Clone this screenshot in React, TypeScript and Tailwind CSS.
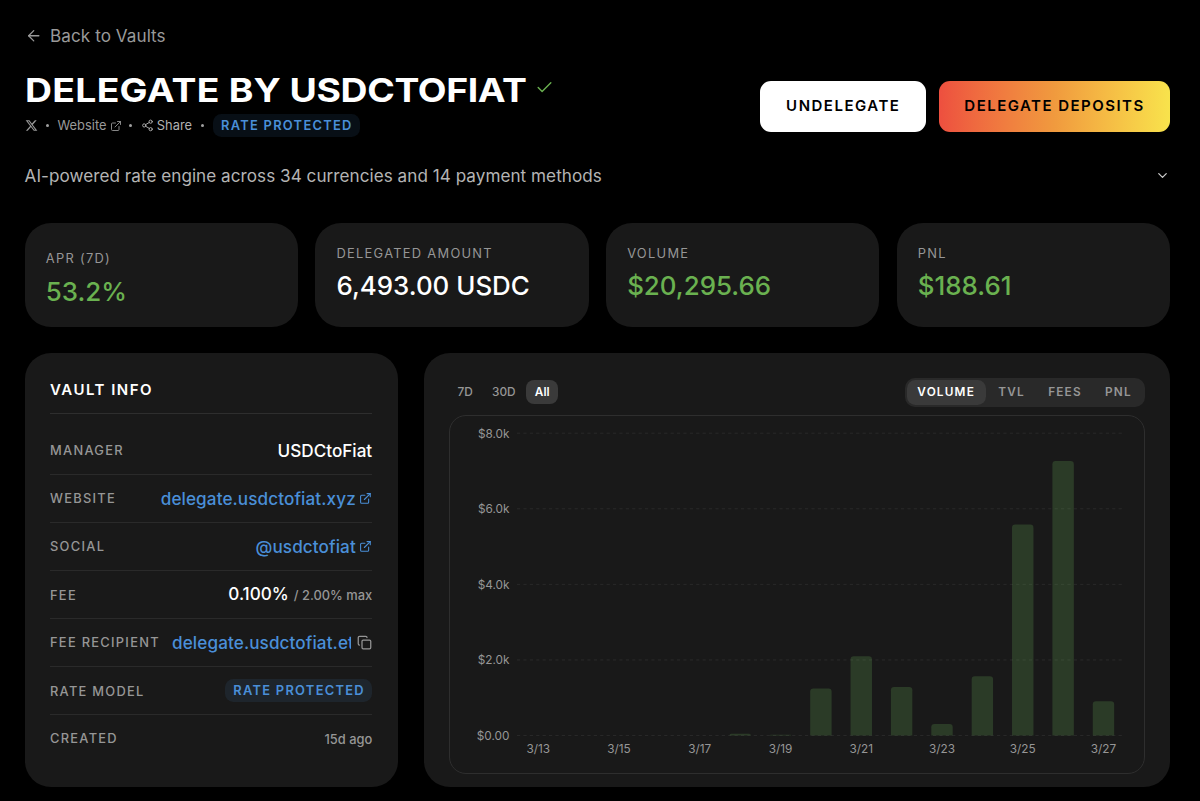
import React from "react";
import { ArrowLeft, Check, ChevronDown, Copy, ExternalLink, Share2 } from "lucide-react";

const LABEL = "text-[12.86px] leading-none tracking-[0.1em] text-[#969696] whitespace-nowrap";

function XLogo() {
  return (
    <svg viewBox="0 0 24 24" className="size-[13px]" fill="currentColor">
      <path d="M18.244 2.25h3.308l-7.227 8.26 8.502 11.24H16.17l-5.214-6.817L4.99 21.75H1.68l7.73-8.835L1.254 2.25H8.08l4.713 6.231zm-1.161 17.52h1.833L7.084 4.126H5.117z" />
    </svg>
  );
}

function Dot() {
  return <span className="size-[3px] shrink-0 rounded-full bg-[#a0a0a0]" />;
}

function RateBadge() {
  return (
    <span className="flex h-[23px] items-center rounded-[8.5px] bg-[#4a8fd8]/10 pt-[1px] pr-[7.3px] pl-[8.5px] text-[12.86px] font-semibold leading-none tracking-[0.1em] whitespace-nowrap text-[#4a8fd8]">
      RATE PROTECTED
    </span>
  );
}

function Header() {
  return (
    <header className="flex h-[90px] justify-between">
      <div>
        <div className="flex h-[40px] items-center">
          <h1 className="w-[505px] origin-left scale-x-[1.132] text-[33px] font-bold leading-[40px] whitespace-nowrap text-white">
            <span className="tracking-[0.25px]">DELEGATE</span> <span>BY</span> <span className="tracking-[-0.35px]">USDCTOFIAT</span>
          </h1>
          <Check className="mb-[5px] ml-[5px] size-[19px] text-[#6ab150]" strokeWidth={1.75} />
        </div>
        <div className="mt-[4px] flex h-[23px] items-center text-[12.86px] leading-none text-[#999999]">
          <XLogo />
          <span className="ml-[8.5px] flex">
            <Dot />
          </span>
          <span className="ml-[8.5px] pt-[2px]">Website</span>
          <ExternalLink className="ml-[3.5px] size-[12px]" strokeWidth={1.75} />
          <span className="ml-[7.5px] flex">
            <Dot />
          </span>
          <Share2 className="ml-[8.5px] size-[12.86px] text-[#b0b0b0]" strokeWidth={1.75} />
          <span className="ml-[3px] pt-[2px] text-[#b0b0b0]">Share</span>
          <span className="mr-[9px] ml-[8.5px] flex">
            <Dot />
          </span>
          <RateBadge />
        </div>
      </div>
      <div className="mt-[10.5px] flex h-[51px] gap-[13px] text-[15px] font-semibold leading-none tracking-[0.1em] text-black">
        <button className="w-[166.5px] rounded-[11px] bg-white pb-[1px] pl-[1px] whitespace-nowrap">UNDELEGATE</button>
        <button className="w-[231px] rounded-[11px] bg-linear-to-r from-[#ed4f3f] via-[#f09a3e] to-[#f8e34c] pb-[1px] tracking-[0.098em] whitespace-nowrap">
          DELEGATE DEPOSITS
        </button>
      </div>
    </header>
  );
}

const stats = [
  { label: "APR (7D)", value: "53.2%", color: "text-[#6ab150]", pad: "pt-[30px]", gap: "mt-[13.5px]" },
  { label: "DELEGATED AMOUNT", value: "6,493.00 USDC", color: "text-white", pad: "pt-[25px]", gap: "mt-[12px]" },
  { label: "VOLUME", value: "$20,295.66", color: "text-[#6ab150]", pad: "pt-[25px]", gap: "mt-[12px]" },
  { label: "PNL", value: "$188.61", color: "text-[#6ab150]", pad: "pt-[25px]", gap: "mt-[12px]" },
];

function Stats() {
  return (
    <section className="grid grid-cols-4 gap-[17.3px]">
      {stats.map((s) => (
        <div key={s.label} className={`h-[104px] rounded-[26px] bg-[#191919] pl-[21.2px] ${s.pad}`}>
          <div className={LABEL}>{s.label}</div>
          <div className={`text-[25.9px] leading-none font-medium whitespace-nowrap ${s.gap} ${s.color}`}>{s.value}</div>
        </div>
      ))}
    </section>
  );
}

function InfoRow({ label, shift, last, children }: { label: string; shift?: string; last?: boolean; children: React.ReactNode }) {
  return (
    <div className={`flex h-[48px] items-center justify-between ${last ? "" : "border-b border-[#2a2a2a]"}`}>
      <span className={`${LABEL} font-medium ${shift ?? "pt-[2px]"}`}>{label}</span>
      {children}
    </div>
  );
}

function InfoLink({ children }: { children: string }) {
  return (
    <a className="flex items-center gap-[3.5px] text-[17.14px] leading-none font-medium tracking-[0.1px] text-[#4a8fd8]">
      {children}
      <ExternalLink className="size-[12.86px]" strokeWidth={2} />
    </a>
  );
}

function VaultInfo() {
  return (
    <section className="w-[373px] rounded-[26px] bg-[#191919] px-[25.4px] pt-[26px]">
      <h2 className="h-[35px] border-b border-[#2e2e2e] text-[15px] leading-[21px] font-semibold tracking-[0.1em] text-white">VAULT INFO</h2>
      <div className="pt-[13px]">
        <InfoRow label="MANAGER">
          <span className="text-[17.14px] leading-none font-medium text-white">USDCtoFiat</span>
        </InfoRow>
        <InfoRow label="WEBSITE">
          <InfoLink>delegate.usdctofiat.xyz</InfoLink>
        </InfoRow>
        <InfoRow label="SOCIAL">
          <InfoLink>@usdctofiat</InfoLink>
        </InfoRow>
        <InfoRow label="FEE" shift="pt-[3px]">
          <span className="flex items-baseline gap-[5px] pb-[1px] text-[17.14px] leading-none font-medium text-white">
            0.100%<span className="text-[12.86px] text-[#969696]">/ 2.00% max</span>
          </span>
        </InfoRow>
        <InfoRow label="FEE RECIPIENT">
          <span className="flex items-center gap-[6px] text-[17.14px] leading-[21px] font-medium tracking-[0.1px] text-[#4a8fd8]">
            <span className="w-[179.2px] overflow-hidden whitespace-nowrap">delegate.usdctofiat.eth</span>
            <Copy className="size-[15px] text-[#969696]" strokeWidth={2} />
          </span>
        </InfoRow>
        <InfoRow label="RATE MODEL" shift="pt-[3px]">
          <RateBadge />
        </InfoRow>
        <InfoRow label="CREATED" last shift="pt-0">
          <span className="pt-[3px] text-[12.86px] leading-none font-medium text-[#969696]">15d ago</span>
        </InfoRow>
      </div>
    </section>
  );
}

const BASE = 735.5;
const bars = [
  { i: 5, top: 733.8 },
  { i: 6, top: 734.8 },
  { i: 7, top: 688.6 },
  { i: 8, top: 656.2 },
  { i: 9, top: 687 },
  { i: 10, top: 724 },
  { i: 11, top: 676.2 },
  { i: 12, top: 524.5 },
  { i: 13, top: 461 },
  { i: 14, top: 701.3 },
];
const yTicks = ["$8.0k", "$6.0k", "$4.0k", "$2.0k", "$0.00"];
const xTicks = ["3/13", "3/15", "3/17", "3/19", "3/21", "3/23", "3/25", "3/27"];
const center = (i: number) => 538.3 + i * 40.37;

function barPath(x: number, top: number) {
  const r = Math.min(3.2, BASE - top);
  return `M${x} ${BASE}V${top + r}Q${x} ${top} ${x + r} ${top}H${x + 21.4 - r}Q${x + 21.4} ${top} ${x + 21.4} ${top + r}V${BASE}Z`;
}

function Chart() {
  return (
    <svg viewBox="450 416 694 357" className="block h-[357px] w-[694px]">
      {yTicks.map((t, i) => (
        <g key={t}>
          <line x1="517" x2="1122" y1={433.2 + i * 75.58} y2={433.2 + i * 75.58} stroke="#292929" strokeWidth="1" strokeDasharray="3.2 3.2" />
          <text x="509.5" y={437.5 + i * 75.58} textAnchor="end" className="fill-[#969696] text-[11.8px]">
            {t}
          </text>
        </g>
      ))}
      {bars.map((b) => (
        <path key={b.i} d={barPath(center(b.i) - 10.7, b.top)} fill="#65a555" fillOpacity="0.25" />
      ))}
      {xTicks.map((t, i) => (
        <text key={t} x={center(i * 2)} y="752.5" textAnchor="middle" className="fill-[#969696] text-[11.8px]">
          {t}
        </text>
      ))}
    </svg>
  );
}

function ChartPanel() {
  return (
    <section className="w-[746.5px] rounded-[26px] bg-[#191919] px-[25.5px] pt-[25px]">
      <div className="flex h-[29px] items-center justify-between text-[11.8px] leading-none font-medium text-[#969696]">
        <div className="flex gap-[2.1px] pb-[1px]">
          <span className="flex h-[24px] items-center px-[8.57px] pt-[1px]">7D</span>
          <span className="flex h-[24px] items-center px-[8.57px] pt-[1px]">30D</span>
          <span className="flex h-[24px] items-center rounded-[8px] bg-[#3a3a3a] px-[8.57px] pt-[1px] font-semibold text-white">All</span>
        </div>
        <div className="flex h-[29px] items-center gap-[2.1px] rounded-[10px] bg-[#292929] px-[2.1px] font-semibold tracking-[0.1em]">
          <span className="flex h-[24.5px] items-center rounded-[8.5px] bg-[#3a3a3a] px-[10.6px] text-white">VOLUME</span>
          <span className="px-[10.6px]">TVL</span>
          <span className="px-[10.6px]">FEES</span>
          <span className="px-[10.6px]">PNL</span>
        </div>
      </div>
      <div className="mt-[8px] h-[359px] overflow-hidden rounded-[17px] border border-[#2e2e2e]">
        <Chart />
      </div>
    </section>
  );
}

export default function App() {
  return (
    <main className="h-[801px] w-[1200px] overflow-hidden bg-black pr-[30px] pl-[24.6px] font-['Inter',sans-serif]">
      <a className="flex h-[70px] items-center gap-[8px] pt-[2px] text-[17.14px] leading-none tracking-[0.05px] text-[#999999]">
        <ArrowLeft className="size-[17.5px]" strokeWidth={1.75} />
        Back to Vaults
      </a>
      <Header />
      <div className="flex h-[31px] items-center justify-between text-[17.14px] leading-none tracking-[0.03px] text-[#b4b4b4]">
        <p className="pt-[1px]">AI-powered rate engine across 34 currencies and 14 payment methods</p>
        <ChevronDown className="size-[15px] text-[#cccccc]" strokeWidth={2} />
      </div>
      <div className="mt-[32px]">
        <Stats />
      </div>
      <div className="mt-[26px] flex h-[434px] justify-between">
        <VaultInfo />
        <ChartPanel />
      </div>
    </main>
  );
}
